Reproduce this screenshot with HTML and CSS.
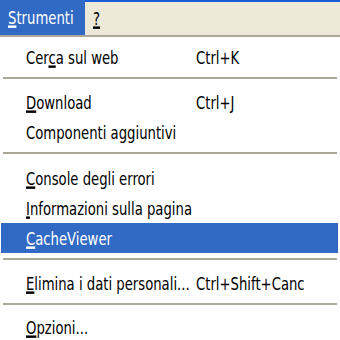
FILE: index.html
```html
<!DOCTYPE html>
<html>
<head>
<meta charset="utf-8">
<link rel="stylesheet" href="styles.css">
</head>
<body>
<div class="window">
  <div class="titleline"></div>
  <div class="menubar">
    <div class="mb-item active"><span class="t"><u>S</u>trumenti</span></div>
    <div class="mb-item"><span class="t"><u>?</u></span></div>
  </div>
  <div class="menu">
    <div class="item"><span class="t">Cer<u>c</u>a sul web</span><span class="t key">Ctrl+K</span></div>
    <div class="sep"></div>
    <div class="item"><span class="t"><u>D</u>ownload</span><span class="t key">Ctrl+J</span></div>
    <div class="item"><span class="t">Componenti a<u>g</u>giuntivi</span></div>
    <div class="sep tall"></div>
    <div class="item"><span class="t"><u>C</u>onsole degli errori</span></div>
    <div class="item"><span class="t"><u>I</u>nformazioni sulla pagina</span></div>
    <div class="item hl"><span class="t"><u>C</u>acheViewer</span></div>
    <div class="sep"></div>
    <div class="item"><span class="t"><u>E</u>limina i dati personali...</span><span class="t key">Ctrl+Shift+Canc</span></div>
    <div class="sep short"></div>
    <div class="item"><span class="t"><u>O</u>pzioni...</span></div>
  </div>
</div>
</body>
</html>
```

FILE: styles.css
```css
html, body {
  margin: 0;
  padding: 0;
  background: #ffffff;
}
body {
  font-family: "DejaVu Sans Condensed", "DejaVu Sans", sans-serif;
  font-stretch: condensed;
  font-size: 14.7px;
  color: #000000;
}
.window {
  width: 340px;
  height: 340px;
  overflow: hidden;
}
.titleline {
  height: 2px;
  background: #1c5ad8;
}
.menubar {
  height: 33px;
  background: #ece9d8;
  display: flex;
  border-bottom: 2px solid #aca899;
}
.mb-item {
  display: flex;
  align-items: center;
  padding: 0 10px 0 8px;
}
.mb-item.active {
  background: #316ac5;
  color: #ffffff;
  margin-top: -2px;
  width: 67px;
}
.t {
  display: inline-block;
  transform: scaleY(1.22);
  white-space: nowrap;
}
u {
  text-decoration-thickness: 1.5px;
  text-underline-offset: 1px;
}
.menu {
  padding: 5px 2px 0 1px;
}
.item {
  height: 30px;
  display: grid;
  grid-template-columns: 170px auto;
  align-items: center;
  padding-left: 25px;
}
.item.hl {
  background: #316ac5;
  color: #ffffff;
}
.sep {
  height: 15px;
  box-sizing: border-box;
  padding: 5px 0 0 2px;
}
.sep.tall {
  height: 16px;
}
.sep.short {
  height: 14px;
}
.sep::before {
  content: "";
  display: block;
  width: 334px;
  height: 2px;
  background: #aca899;
}
```
